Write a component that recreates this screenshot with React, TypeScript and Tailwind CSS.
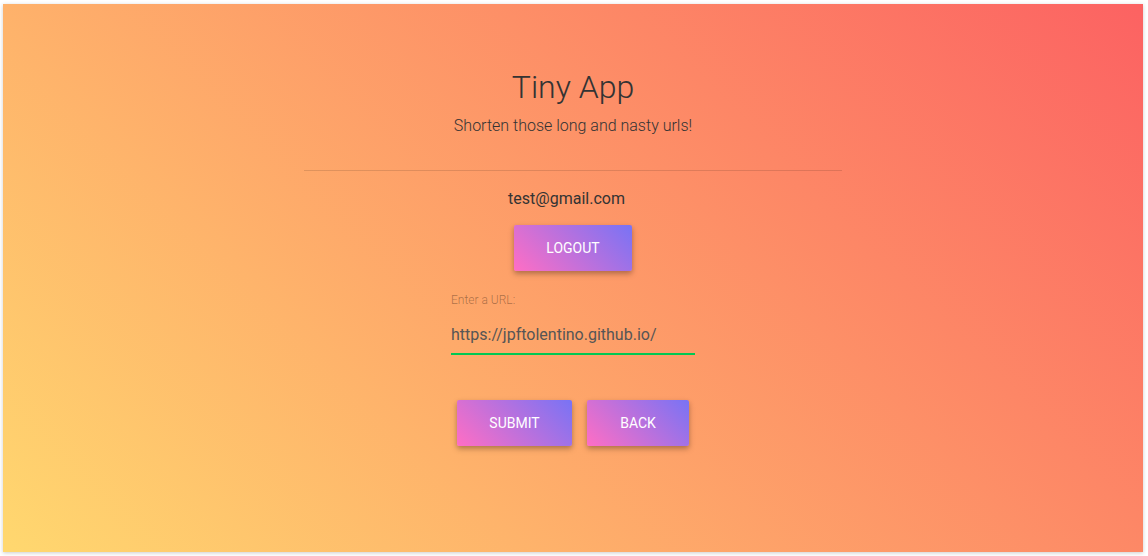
import React from "react";

const btn =
  "h-[46px] flex items-center justify-center text-white text-[14px] font-normal uppercase rounded-[2px] bg-[linear-gradient(45deg,#ff6ec4,#7873f5)] shadow-[0_3px_6px_rgba(0,0,0,0.22),0_2px_4px_rgba(0,0,0,0.12)]";

export default function App() {
  return (
    <div
      className="w-[1148px] h-[556px] bg-white pt-[4px] pl-[3px] pr-[5px] pb-[4px]"
      style={{ fontFamily: "Roboto, 'Liberation Sans', sans-serif" }}
    >
      <div className="w-full h-full flex flex-col items-center bg-[linear-gradient(45deg,#ffd86f,#fc6262)] shadow-[0_1px_4px_rgba(0,0,0,0.2)]">
        <h1 className="mt-[63px] text-[32px] leading-[40px] font-light text-[#333]">Tiny App</h1>
        <p className="mt-[7px] text-[16px] leading-[24px] font-light text-[#333]">
          Shorten those long and nasty urls!
        </p>
        <div className="mt-[32px] w-[538px] h-px bg-[rgba(0,0,0,0.12)]" />
        <div className="mt-[16px] pr-[13px] text-[16px] leading-[24px] text-[#333]">test@gmail.com</div>
        <button className={`${btn} mt-[14px] w-[118px]`}>Logout</button>
        <div className="mt-[21px] w-[244px] flex flex-col">
          <label className="text-[12px] leading-[16px] font-light text-[rgba(0,0,0,0.35)]">Enter a URL:</label>
          <div className="mt-[15px] pb-[6px] border-b-2 border-[#00c853] text-[16px] leading-[24px] text-[#555]">
            https://jpftolentino.github.io/
          </div>
        </div>
        <div className="mt-[45px] flex gap-[15px]">
          <button className={`${btn} w-[115px]`}>Submit</button>
          <button className={`${btn} w-[102px]`}>Back</button>
        </div>
      </div>
    </div>
  );
}
